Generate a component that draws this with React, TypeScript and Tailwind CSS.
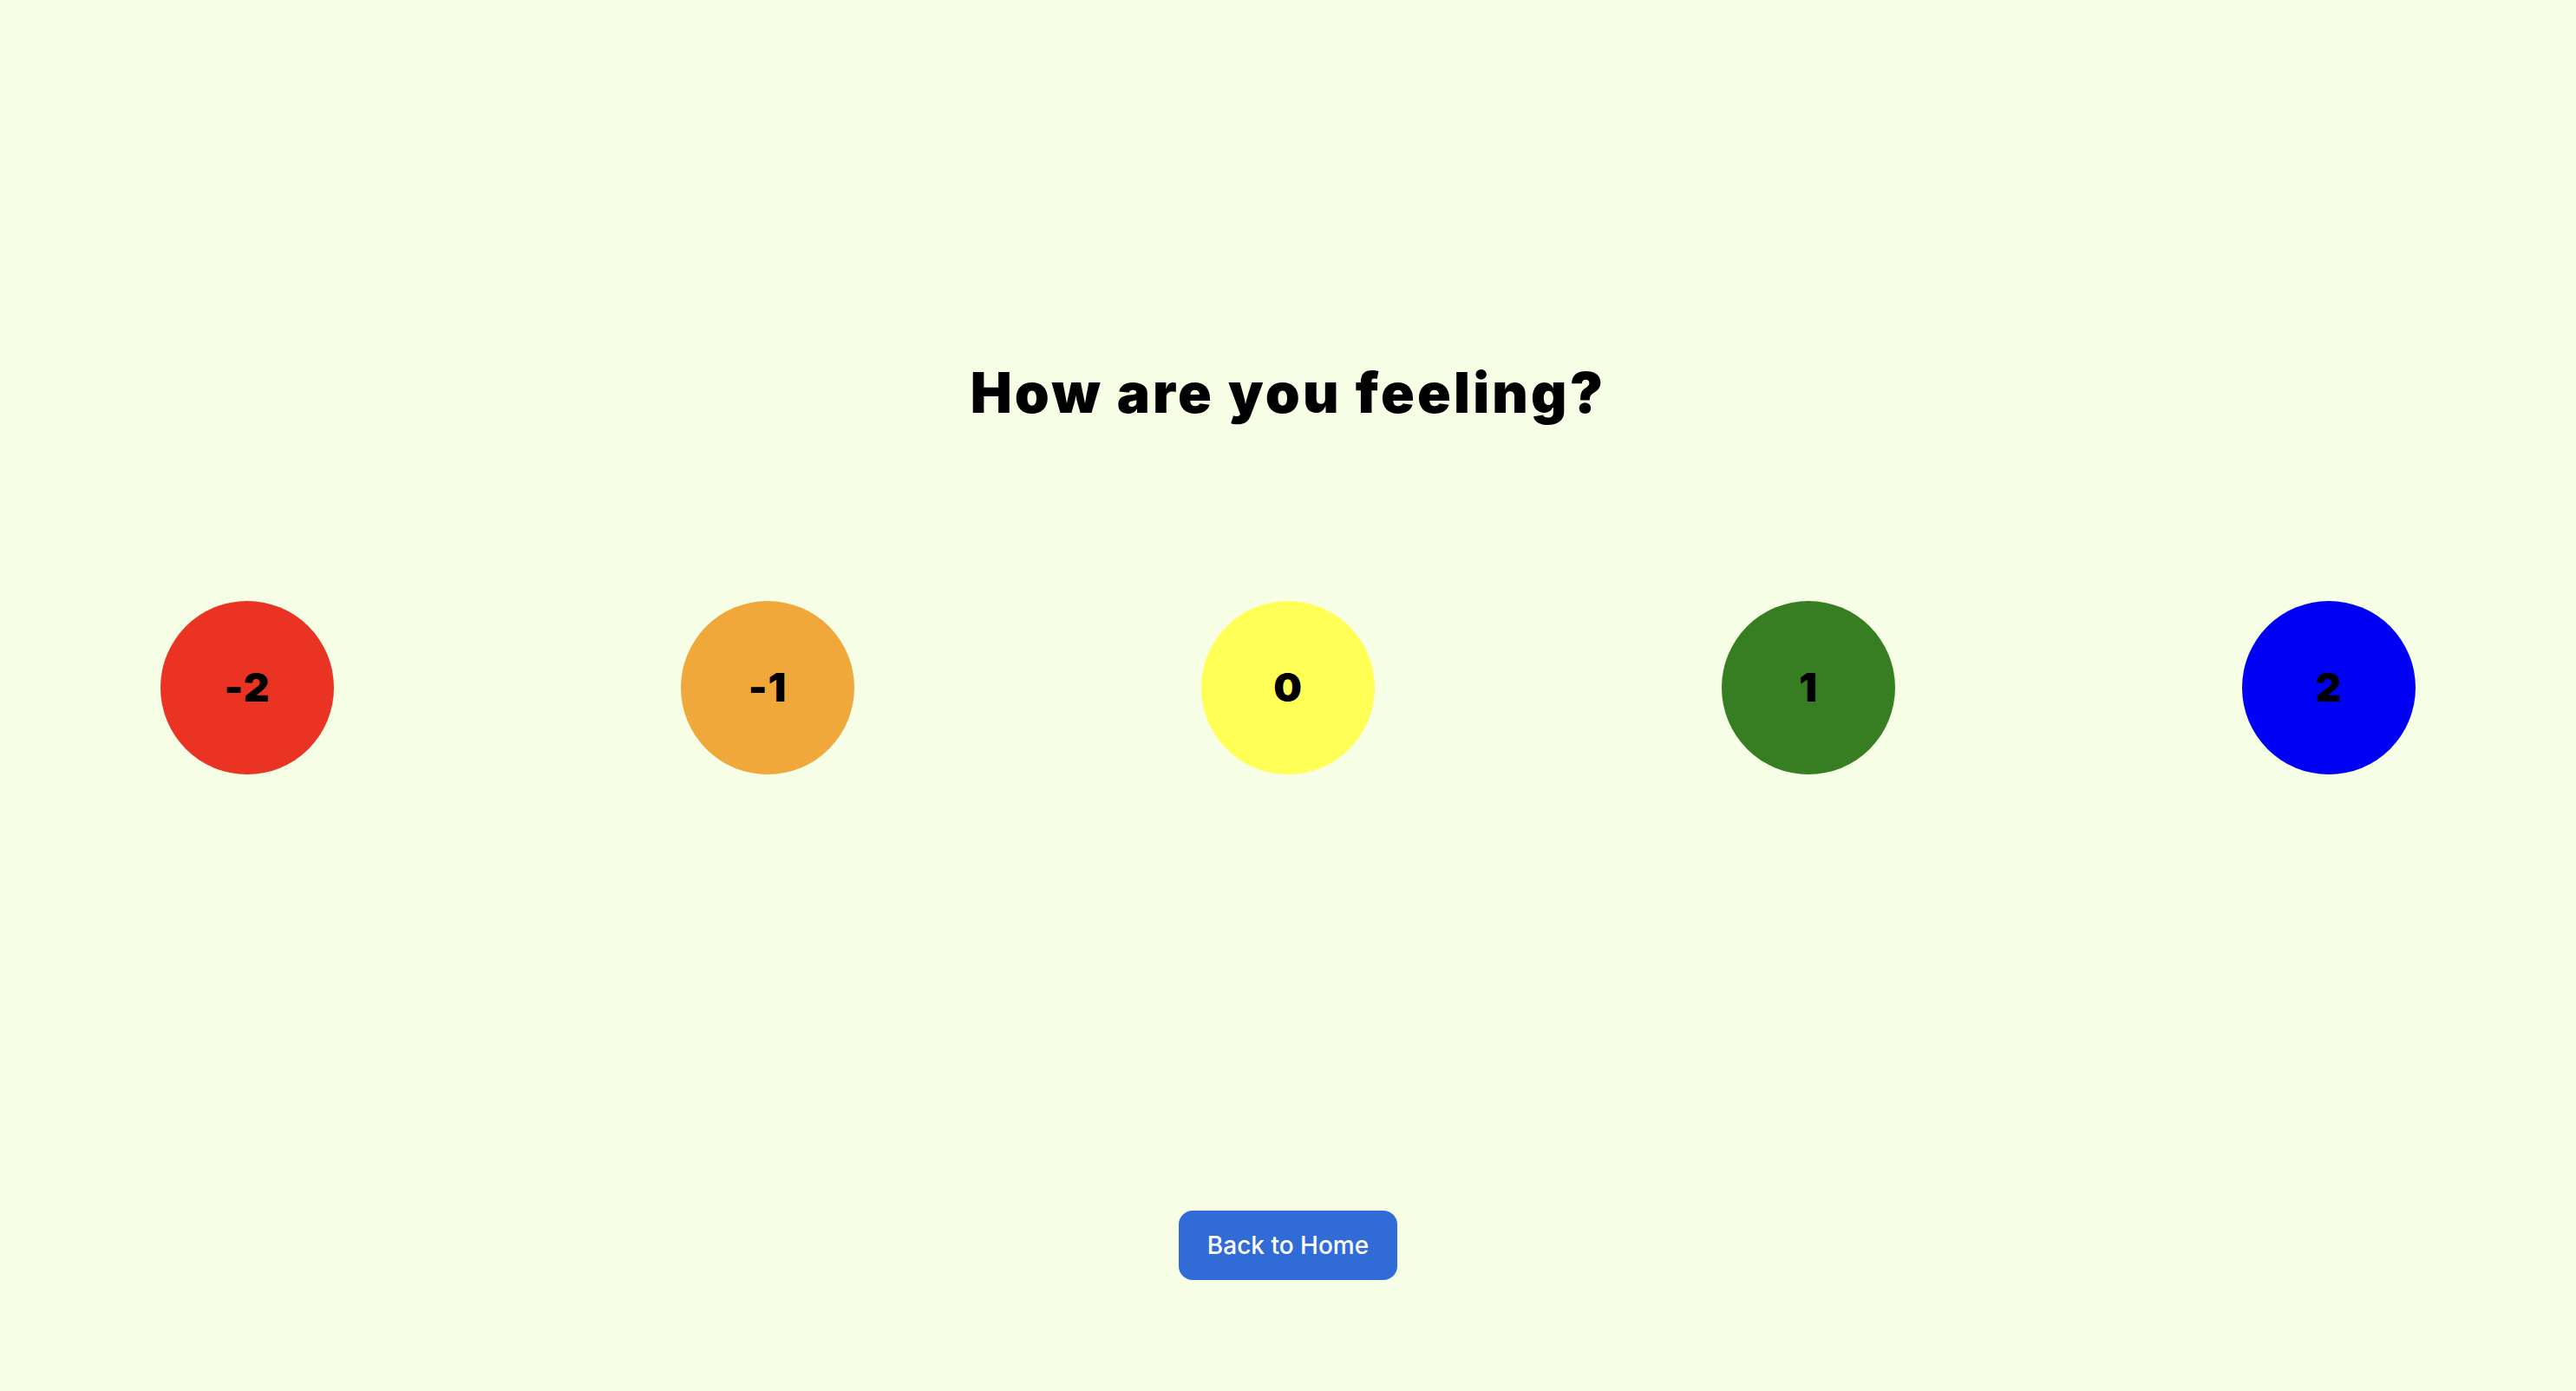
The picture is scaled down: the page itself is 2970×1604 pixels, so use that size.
const moods = [
  { value: -2, color: 'bg-[#ea3323]' },
  { value: -1, color: 'bg-[#f0a83b]' },
  { value: 0, color: 'bg-[#ffff55]' },
  { value: 1, color: 'bg-[#377e22]' },
  { value: 2, color: 'bg-[#0000f5]' },
]

export default function App() {
  return (
    <div className="min-h-screen w-full bg-[#f6fee6] flex flex-col items-center font-['Inter',sans-serif]">
      {/* Heading */}
      <h1 className="mt-[415px] text-[64px] leading-[1.2] font-black tracking-[0.05em] text-black">
        How are you feeling?
      </h1>

      {/* Mood scale */}
      <div className="mt-[201px] flex justify-center gap-[400px]">
        {moods.map((mood) => (
          <button
            key={mood.value}
            className={`w-[200px] h-[200px] rounded-full flex items-center justify-center text-[46px] font-black tracking-[0.02em] text-black ${mood.color}`}
          >
            {mood.value}
          </button>
        ))}
      </div>

      {/* Back */}
      <button className="mt-[503px] w-[252px] h-[80px] rounded-[16px] bg-[#306bd6] text-white text-[28px] font-medium">
        Back to Home
      </button>
    </div>
  )
}
